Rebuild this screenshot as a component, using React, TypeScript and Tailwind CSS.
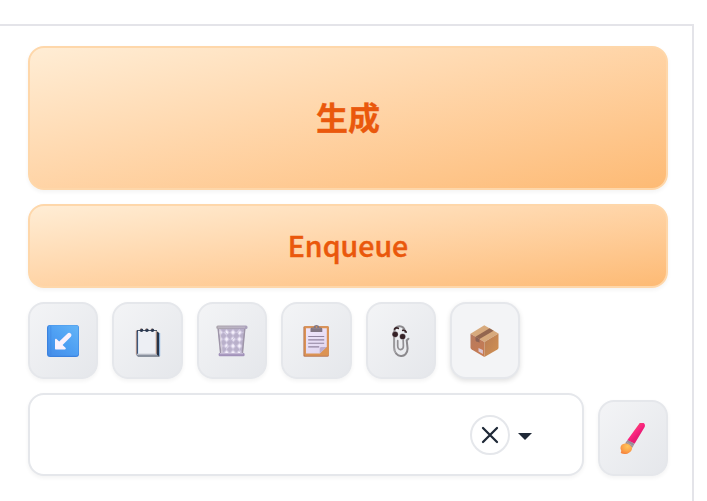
import type { ReactNode } from "react";

function ArrowIcon() {
  return (
    <svg width="32" height="32" viewBox="0 0 32 32" fill="none">
      <defs>
        <linearGradient id="tile" x1="28" y1="2" x2="3" y2="30" gradientUnits="userSpaceOnUse">
          <stop stopColor="#61b2f6" />
          <stop offset="0.5" stopColor="#4e9ff3" />
          <stop offset="1" stopColor="#458ee9" />
        </linearGradient>
      </defs>
      <rect width="32" height="32" rx="3" fill="#3b82df" />
      <rect x="1.2" y="0.3" width="30.3" height="30.4" rx="2.6" fill="url(#tile)" />
      <path d="M3.8 1v29" stroke="#3d86e3" strokeWidth="1" opacity="0.6" />
      <path d="M8 14.7c0-.9.8-1.3 1.5-.7l2.7 2.6 8.4-8.1c1-1 2.2-.8 3.1.1.9.9 1.1 2 .1 3.1l-8.2 8.2 2.9 2.8c.7.7.3 1.7-.7 1.7H9c-.7 0-1-.4-1-1z" fill="#fbf1fc" />
    </svg>
  );
}

function NotepadIcon() {
  return (
    <svg width="32" height="32" viewBox="0 0 32 32" fill="none">
      <path d="M5 6h20.5v25.5H6L4.5 30z" fill="#edeff4" />
      <path d="M5 5.5h20" stroke="#4b5565" strokeWidth="1" />
      <path d="M4.3 5.5v24" stroke="#df9b70" strokeWidth="0.8" />
      <path d="M5.3 5.5v25" stroke="#243a60" strokeWidth="1.3" />
      <path d="M6.3 7v22" stroke="#b8dafa" strokeWidth="0.6" />
      <path d="M24.5 6l2.8 2v23.8l-2.8-2.3z" fill="#273347" />
      <path d="M24.2 6v23.5" stroke="#b8805d" strokeWidth="0.7" />
      <path d="M27.7 8v23" stroke="#64a7ed" strokeWidth="0.7" />
      <path d="M5 29.4h19.5" stroke="#b7bbc5" strokeWidth="1.4" />
      <path d="M5.6 31h21.6" stroke="#4b5565" strokeWidth="1.2" />
      <circle cx="9.5" cy="5.2" r="1.8" fill="#293750" />
      <circle cx="14.9" cy="5.2" r="1.8" fill="#293750" />
      <circle cx="20.4" cy="5.2" r="1.8" fill="#293750" />
      <path d="M8 4.4l1.5-.7M13.4 4.4l1.5-.7M18.9 4.4l1.5-.7" stroke="#ca9376" strokeWidth="0.6" />
    </svg>
  );
}

function BasketIcon() {
  return (
    <svg width="32" height="32" viewBox="0 0 32 32" fill="none">
      <defs>
        <linearGradient id="metal" x1="3" y1="3" x2="29" y2="29" gradientUnits="userSpaceOnUse">
          <stop stopColor="#aca5ae" />
          <stop offset="0.55" stopColor="#aaa0bc" />
          <stop offset="1" stopColor="#988eb2" />
        </linearGradient>
        <pattern id="mesh" width="6.4" height="6.8" patternUnits="userSpaceOnUse" patternTransform="translate(1 4)">
          <rect width="6.4" height="6.8" fill="#b9b0ca" />
          <path d="M3.2 0L6.4 3.4 3.2 6.8 0 3.4z" fill="#d3cbe4" />
          <path d="M3.2 1.1l1.7 2.4-1.7 2.1-1.7-2.1z" fill="#f6f2fc" />
        </pattern>
      </defs>
      <path d="M1.5 2h28l-2.8 27H4.3z" fill="url(#mesh)" />
      <path d="M7 4l18 24M25 4L6 28" stroke="#b6acc9" strokeWidth="0.6" />
      <path d="M2.2 3.5L4.7 29M28.8 3.5L26.3 29" stroke="#9e95a8" strokeWidth="1.5" />
      <path d="M3.7 4L6.2 28" stroke="#d5ceda" strokeWidth="1" />
      <rect x="0.3" y="0.4" width="31.2" height="3.7" rx="1.5" fill="url(#metal)" />
      <path d="M2 2.2h27" stroke="#c9c2ce" strokeWidth="0.8" />
      <rect x="2.6" y="28" width="26" height="3.2" rx="1.3" fill="#a292ba" />
      <path d="M4 28.7h23" stroke="#cac0da" strokeWidth="1" />
    </svg>
  );
}

function ClipboardIcon() {
  return (
    <svg width="32" height="32" viewBox="0 0 32 32" fill="none">
      <defs>
        <linearGradient id="sheet" x1="7" y1="4" x2="22" y2="29" gradientUnits="userSpaceOnUse">
          <stop stopColor="#eee4fa" />
          <stop offset="1" stopColor="#e1d7ef" />
        </linearGradient>
      </defs>
      <rect x="3.4" y="1.2" width="25.4" height="30.6" rx="1.4" fill="#ba7857" />
      <rect x="4.4" y="1.2" width="24.4" height="29.5" rx="1.2" fill="#dc9353" />
      <path d="M6 3.2h20.8v18.3l-7 7H6z" fill="url(#sheet)" />
      <path d="M19.7 28.5v-4.6c0-1.4.8-2 2-2h5z" fill="#bdadcd" />
      <path d="M8.2 11.5h16M8.2 14.9h16M8.2 18.3h16M8.2 21.9h11" stroke="#91849f" strokeWidth="1.1" />
      <path d="M10.5 6.9V4.1c0-1.2.7-1.7 2-1.7h1.2c0-3 5.2-3.3 5.7 0h1.1c1.2 0 1.8.7 1.8 1.8v2.7z" fill="#817683" />
      <path d="M12.5 3.6h8" stroke="#918693" strokeWidth="0.8" />
      <circle cx="16.5" cy="2" r="0.9" fill="#ca9160" />
    </svg>
  );
}

function ClippyIcon() {
  return (
    <svg width="32" height="32" viewBox="0 0 32 32" fill="none">
      <path d="M20 6.8C18.7-.8 10-.5 9.1 7.2v15c0 11.3 13.5 11.7 13.5 1.4l-.9-8.2 1.7-1.6" stroke="#8b898d" strokeWidth="2" strokeLinecap="round" />
      <path d="M12.7 15.7v5.4c0 4.8 5.9 4.5 5.7-.2l-.3-7.2" stroke="#918f93" strokeWidth="1.7" strokeLinecap="round" />
      <path d="M9 12v11c0 2.1.6 3.8 1.6 5" stroke="#c4c2c5" strokeWidth="0.6" />
      <circle cx="10.1" cy="9.3" r="3.1" fill="#988f95" />
      <circle cx="10.2" cy="9.3" r="2.6" fill="#352126" />
      <circle cx="17.6" cy="11.5" r="3.1" fill="#988f95" />
      <circle cx="17.6" cy="11.5" r="2.6" fill="#352126" />
      <path d="M9.5 4c1-1.2 2.6-1.3 3.8-.7M17.7 5.3c1.5-.2 3 .7 3.5 1.8" stroke="#392428" strokeWidth="1.7" strokeLinecap="round" />
    </svg>
  );
}

function PackageIcon() {
  return (
    <svg width="32" height="32" viewBox="0 0 32 32" fill="none">
      <defs>
        <linearGradient id="left" x1="2" y1="11" x2="15" y2="29" gradientUnits="userSpaceOnUse">
          <stop stopColor="#b77a5e" />
          <stop offset="1" stopColor="#c77b52" />
        </linearGradient>
        <linearGradient id="right" x1="16" y1="17" x2="30" y2="25" gradientUnits="userSpaceOnUse">
          <stop stopColor="#bd8054" />
          <stop offset="1" stopColor="#ce8f53" />
        </linearGradient>
      </defs>
      <g transform="translate(-0.5 0)">
        <path d="M2 8.8L15.8.3 30 8.5 15.9 17z" fill="#d7aa7d" />
        <path d="M2 8.8L15.9 17v15L3.2 24.4C2.4 23.9 2 23.4 2 22.5z" fill="url(#left)" />
        <path d="M30 8.5L15.9 17v15l13-7.4c.7-.4 1.1-1 1.1-1.8z" fill="url(#right)" />
        <path d="M7 11.7L21.1 3.3l4 2.4L11 14.1z" fill="#93664f" />
        <path d="M7 11.7l4 2.4v3.6l-1.6-.9-1 .2-1.4-1.5z" fill="#8c6154" />
        <path d="M10 23l4.4 2.1v3.8L10 26.5z" fill="#dac7d5" />
      </g>
    </svg>
  );
}

function BrushIcon() {
  return (
    <svg width="32" height="32" viewBox="0 0 32 32" fill="none">
      <defs>
        <linearGradient id="handle" x1="17" y1="7" x2="22" y2="12" gradientUnits="userSpaceOnUse">
          <stop stopColor="#f53c70" />
          <stop offset="0.45" stopColor="#fb2480" />
          <stop offset="1" stopColor="#e91c74" />
        </linearGradient>
        <radialGradient id="bristle" cx="0.6" cy="0.3" r="0.7">
          <stop stopColor="#ffc45b" />
          <stop offset="0.6" stopColor="#fca449" />
          <stop offset="1" stopColor="#f6863f" />
        </radialGradient>
      </defs>
      <g transform="translate(0 -0.7)">
        <path d="M10.2 18L22.2 1.4c1.1-1.5 2.7-1.9 4.3-.8 1.6 1.1 1.8 2.6 1 4.3L17.6 21.4z" fill="url(#handle)" />
        <path d="M10.6 17.7l6.9 3.8-2.2 3.9-7.2-4.5z" fill="#968b96" />
        <path d="M9.6 19.8l6.5 4" stroke="#b2a7ae" strokeWidth="0.8" />
        <path d="M8 21.1c3.2-.2 6.4 1.6 7.1 4.5-.1 4.5-6.5 7.9-11.4 5.1.2-1.2.9-1.7.3-2.9-1.6-3.4.7-6.6 4-6.7z" fill="url(#bristle)" />
      </g>
    </svg>
  );
}

function ToolButton({ label, height = "h-[77px]", active = false, children }: { label: string; height?: string; active?: boolean; children: ReactNode }) {
  return (
    <button
      aria-label={label}
      className={
        `flex w-[70.4px] shrink-0 items-center justify-center rounded-[16px] border-2 border-[#e5e7eb] pt-px ${height} ` +
        (active
          ? "bg-[#f3f4f6] shadow-[0_2px_5px_rgba(0,0,0,0.12)]"
          : "bg-linear-to-br from-[#f3f4f6] to-[#e5e7eb] shadow-[0_2px_4px_rgba(0,0,0,0.05)]")
      }
    >
      {children}
    </button>
  );
}

export default function App() {
  return (
    <div className="h-[501px] w-[707px] overflow-hidden bg-white pt-6 font-['Noto_Sans_CJK_SC',sans-serif]">
      <main className="flex h-[477px] w-[694px] flex-col border-t-2 border-r-2 border-[#e4e4e9] pt-5 pr-6 pl-7">
        <button className="flex h-36 w-full shrink-0 items-center justify-center rounded-[16px] border-2 border-[#fed7aa] bg-linear-to-br from-[#ffedd5] to-[#fdba74] pb-1 text-[32px] leading-none font-bold text-[#ea580c] shadow-[0_2px_4px_rgba(0,0,0,0.05)] [-webkit-text-stroke:0.3px_#ea580c]">
          生成
        </button>
        <button className="mt-3.5 flex h-21 w-full shrink-0 items-center justify-center rounded-[16px] border-2 border-[#fed7aa] bg-linear-to-br from-[#ffedd5] to-[#fdba74] pb-0.5 text-[28.5px] leading-none font-medium text-[#ea580c] shadow-[0_2px_4px_rgba(0,0,0,0.05)] [-webkit-text-stroke:0.45px_#ea580c]">
          Enqueue
        </button>
        <div className="mt-3.5 flex gap-[14px]">
          <ToolButton label="↙️"><ArrowIcon /></ToolButton>
          <ToolButton label="🗒️"><NotepadIcon /></ToolButton>
          <ToolButton label="🗑️"><BasketIcon /></ToolButton>
          <ToolButton label="📋"><ClipboardIcon /></ToolButton>
          <ToolButton label="📎"><ClippyIcon /></ToolButton>
          <ToolButton label="📦" active><PackageIcon /></ToolButton>
        </div>
        <div className="mt-3.5 flex items-end gap-3.5">
          <div className="flex h-[83px] flex-1 items-center justify-end rounded-[16px] border-2 border-[#e5e7eb] bg-white pr-[49.5px] shadow-[0_2px_4px_rgba(0,0,0,0.05)]">
            <button className="flex size-10 items-center justify-center rounded-full border-2 border-[#e5e7eb]">
              <svg width="20" height="20" viewBox="0 0 20 20" fill="none" stroke="#1f2937" strokeWidth="2.3" strokeLinecap="round">
                <path d="M3 3l14 14M17 3L3 17" />
              </svg>
            </button>
            <svg className="mt-[3px] ml-[8.5px]" width="14" height="7" viewBox="0 0 14 7">
              <path d="M0 0h14L7 7z" fill="#1f2937" />
            </svg>
          </div>
          <ToolButton label="🖌️" height="h-[76px]"><BrushIcon /></ToolButton>
        </div>
      </main>
    </div>
  );
}
